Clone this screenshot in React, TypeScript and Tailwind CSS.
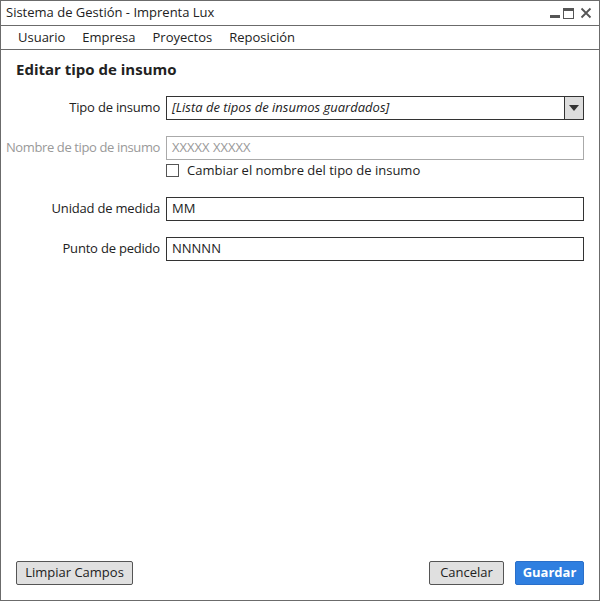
import React from "react";

const font = { fontFamily: '"Open Sans", "Liberation Sans", sans-serif' };

function Label({ text, dim }: { text: string; dim?: boolean }) {
  return (
    <div
      className={`flex w-[154px] shrink-0 justify-end whitespace-nowrap text-[13px] ${
        dim ? "tracking-[-0.38px] text-[#999]" : "tracking-[-0.2px] text-[#222]"
      }`}
    >
      {text}
    </div>
  );
}

function Field({ label, value, dim }: { label: string; value: string; dim?: boolean }) {
  return (
    <div className="flex items-center">
      <Label text={label} dim={dim} />
      <div
        className={`ml-[6px] flex h-[24px] w-[418px] items-center border px-[5px] text-[13px] ${
          dim ? "border-[#aaa] text-[#999]" : "border-[#333] text-[#222]"
        }`}
      >
        {value}
      </div>
    </div>
  );
}

export default function App() {
  return (
    <div className="h-[601px] w-[600px] bg-white" style={font}>
      <div className="flex h-full flex-col border border-[#6b6b6b]">
        {/* title bar */}
        <div className="flex h-[25px] shrink-0 items-center justify-between border-b border-[#6b6b6b] pl-[5px] pr-[7px]">
          <span className="text-[13px] text-[#222]">Sistema de Gestión - Imprenta Lux</span>
          <div className="flex items-end gap-[3px]">
            <div className="mb-[1px] h-[3px] w-[10px] bg-[#555]" />
            <div className="h-[11px] w-[11px] border border-[#555] border-t-[3px]" />
            <svg width="12" height="12" viewBox="0 0 12 12" className="ml-[3px]">
              <path d="M1.5 1.5 L10.5 10.5 M10.5 1.5 L1.5 10.5" stroke="#555" strokeWidth="1.8" />
            </svg>
          </div>
        </div>

        {/* menu */}
        <div className="flex h-[24px] shrink-0 items-center gap-[17px] border-b border-[#6b6b6b] pl-[17px] text-[13px] text-[#222]">
          <span>Usuario</span>
          <span>Empresa</span>
          <span>Proyectos</span>
          <span>Reposición</span>
        </div>

        {/* content */}
        <div className="flex flex-1 flex-col px-[15px] pt-[8px]">
          <h1 className="text-[15px] font-bold text-[#222]">Editar tipo de insumo</h1>

          <div className="-ml-[10px] mt-[15px] flex flex-col">
            <div className="flex items-center">
              <Label text="Tipo de insumo" />
              <div className="ml-[6px] flex h-[24px] w-[418px] items-stretch border border-[#333]">
                <div className="flex flex-1 items-center px-[5px] text-[13px] italic text-[#222]">
                  [Lista de tipos de insumos guardados]
                </div>
                <div className="flex w-[19px] items-center justify-center border-l border-[#333] bg-[#ddd]">
                  <svg width="10" height="6" viewBox="0 0 10 6">
                    <path d="M0 0 H10 L5 6 Z" fill="#333" />
                  </svg>
                </div>
              </div>
            </div>

            <div className="mt-[16px]">
              <Field label="Nombre de tipo de insumo" value="XXXXX XXXXX" dim />
            </div>
            <div className="ml-[160px] mt-[1px] flex items-center gap-[8px] text-[13px] text-[#222]">
              <div className="h-[13px] w-[13px] border border-[#555]" />
              <span>Cambiar el nombre del tipo de insumo</span>
            </div>

            <div className="mt-[17px]">
              <Field label="Unidad de medida" value="MM" />
            </div>
            <div className="mt-[16px]">
              <Field label="Punto de pedido" value="NNNNN" />
            </div>
          </div>

          <div className="mt-auto mb-[15px] flex items-center">
            <button className="h-[24px] w-[117px] rounded-[2px] border border-[#555] bg-[#e0e0e0] text-[13px] text-[#222]">
              Limpiar Campos
            </button>
            <div className="flex-1" />
            <button className="h-[24px] w-[75px] rounded-[2px] border border-[#555] bg-[#e0e0e0] text-[13px] text-[#222]">
              Cancelar
            </button>
            <button className="ml-[11px] h-[24px] w-[69px] rounded-[2px] border border-[#2a6fc9] bg-[#2f7fe0] text-[13px] font-bold text-white">
              Guardar
            </button>
          </div>
        </div>
      </div>
    </div>
  );
}
